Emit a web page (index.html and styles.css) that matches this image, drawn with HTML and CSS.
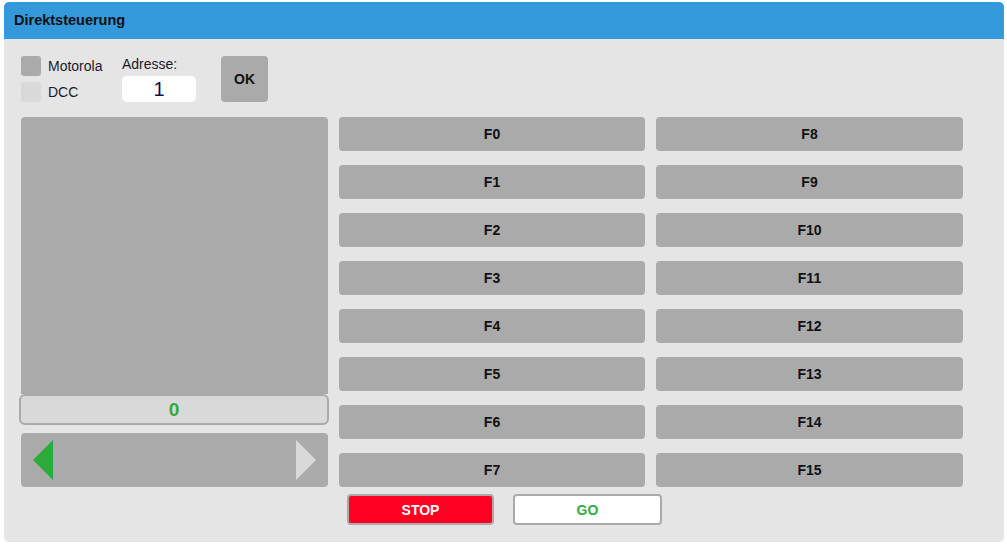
FILE: index.html
```html
<!DOCTYPE html>
<html lang="de">
<head>
<meta charset="utf-8">
<title>Direktsteuerung</title>
<link rel="stylesheet" href="styles.css">
</head>
<body>
<div class="panel">
  <div class="header">Direktsteuerung</div>
  <div class="content">
    <div class="toprow">
      <div class="checks">
        <label class="check"><span class="box box-on"></span><span>Motorola</span></label>
        <label class="check"><span class="box box-off"></span><span>DCC</span></label>
      </div>
      <div class="address">
        <div class="addr-label">Adresse:</div>
        <div class="addr-input">1</div>
      </div>
      <div class="ok">OK</div>
    </div>
    <div class="main">
      <div class="leftcol">
        <div class="display"></div>
        <div class="speed">0</div>
        <div class="arrows">
          <svg class="tri" width="20" height="40" viewBox="0 0 20 40"><polygon points="20,0 0,20 20,40" fill="#2eaa3a"/></svg>
          <svg class="tri" width="20" height="40" viewBox="0 0 20 40"><polygon points="0,0 20,20 0,40" fill="#d9d9d9"/></svg>
        </div>
      </div>
      <div class="fcol">
        <div class="fbtn">F0</div>
        <div class="fbtn">F1</div>
        <div class="fbtn">F2</div>
        <div class="fbtn">F3</div>
        <div class="fbtn">F4</div>
        <div class="fbtn">F5</div>
        <div class="fbtn">F6</div>
        <div class="fbtn">F7</div>
      </div>
      <div class="fcol">
        <div class="fbtn">F8</div>
        <div class="fbtn">F9</div>
        <div class="fbtn">F10</div>
        <div class="fbtn">F11</div>
        <div class="fbtn">F12</div>
        <div class="fbtn">F13</div>
        <div class="fbtn">F14</div>
        <div class="fbtn">F15</div>
      </div>
    </div>
    <div class="actions">
      <div class="btn stop">STOP</div>
      <div class="btn go">GO</div>
    </div>
  </div>
</div>
</body>
</html>
```
FILE: styles.css
```css
html, body {
  margin: 0;
  padding: 0;
  background: #ffffff;
}
body {
  font-family: "Liberation Sans", Arial, sans-serif;
  color: #1a1a1a;
}
.panel {
  margin: 2px 0 0 4px;
  width: 1000px;
  height: 540px;
  background: #e5e5e5;
  border-radius: 5px;
  overflow: hidden;
}
.header {
  height: 37px;
  line-height: 37px;
  background: #3399db;
  color: #111;
  font-weight: bold;
  font-size: 14.5px;
  padding-left: 10px;
}
.content {
  padding: 17px 0 0 17px;
}
.toprow {
  display: flex;
  height: 46px;
}
.checks {
  width: 101px;
  display: flex;
  flex-direction: column;
  gap: 6px;
}
.check {
  display: flex;
  align-items: center;
  gap: 7px;
  height: 20px;
  font-size: 14px;
  color: #1a1a2a;
}
.box {
  width: 20px;
  height: 20px;
  border-radius: 3px;
  flex: none;
}
.box-on { background: #aaaaaa; }
.box-off { background: #d9d9d9; }
.address {
  width: 99px;
  display: flex;
  flex-direction: column;
}
.addr-label {
  font-size: 14px;
  line-height: 16px;
  height: 20px;
  color: #1a1a2a;
}
.addr-input {
  width: 74px;
  height: 26px;
  background: #fff;
  border-radius: 5px;
  text-align: center;
  font-size: 20px;
  line-height: 26px;
  color: #0a0a55;
}
.ok {
  width: 47px;
  height: 46px;
  background: #aaaaaa;
  border-radius: 4px;
  display: flex;
  align-items: center;
  justify-content: center;
  font-weight: bold;
  font-size: 14px;
  color: #111;
}
.main {
  margin-top: 15px;
  display: grid;
  grid-template-columns: 307px 306px 307px;
  column-gap: 11px;
}
.leftcol {
  display: flex;
  flex-direction: column;
}
.display {
  height: 277px;
  background: #aaaaaa;
  border-radius: 4px 4px 0 0;
}
.speed {
  margin: 0 -1px 0 -2px;
  height: 27px;
  border: 2px solid #aaaaaa;
  border-radius: 6px;
  background: #d9d9d9;
  text-align: center;
  line-height: 27px;
  font-weight: bold;
  font-size: 19px;
  color: #33aa44;
}
.arrows {
  margin-top: 8px;
  height: 54px;
  background: #aaaaaa;
  border-radius: 4px;
  display: flex;
  align-items: center;
  justify-content: space-between;
  padding: 0 12px;
}
.tri { display: block; }
.fcol {
  display: flex;
  flex-direction: column;
  gap: 14px;
}
.fbtn {
  height: 34px;
  background: #aaaaaa;
  border-radius: 4px;
  display: flex;
  align-items: center;
  justify-content: center;
  font-weight: bold;
  font-size: 14px;
  color: #111;
}
.actions {
  margin-top: 7px;
  display: flex;
  gap: 19px;
  padding-left: 326px;
}
.btn {
  height: 27px;
  border: 2px solid #aaaaaa;
  border-radius: 4px;
  display: flex;
  align-items: center;
  justify-content: center;
  font-weight: bold;
  font-size: 14px;
}
.stop {
  width: 143px;
  background: #ff0022;
  color: #fff;
}
.go {
  width: 145px;
  background: #fff;
  color: #33aa44;
}
```
